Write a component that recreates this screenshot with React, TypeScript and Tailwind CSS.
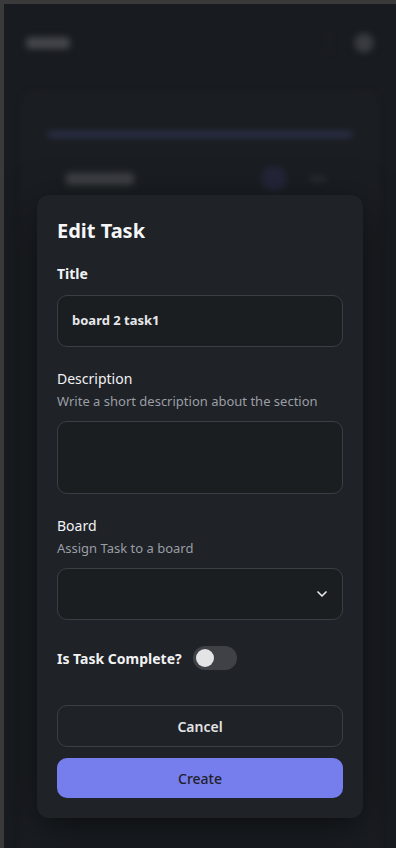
import { ChevronDown } from "lucide-react";

function Field({
  label,
  hint,
  children,
  bold,
}: {
  label: string;
  hint?: string;
  children: React.ReactNode;
  bold?: boolean;
}) {
  return (
    <div className="flex flex-col">
      <span
        className={`text-[14px] leading-5 text-[#f1f2f4] ${bold ? "font-bold" : "font-normal"}`}
      >
        {label}
      </span>
      {hint && (
        <span className="mt-[2px] text-[13px] leading-5 text-[#9a9ea6]">{hint}</span>
      )}
      <div className={hint ? "mt-[10px]" : "mt-[11px]"}>{children}</div>
    </div>
  );
}

export default function App() {
  return (
    <div
      className="h-[848px] w-full overflow-hidden bg-[#3a3a3b] pl-1 pt-1"
      style={{ fontFamily: "'Noto Sans', 'Open Sans', sans-serif" }}
    >
      <div className="relative h-full w-full overflow-hidden bg-[#1b1f23]">
        {/* blurred page behind the dialog */}
        <div className="flex h-full flex-col blur-[3px]">
          <div className="flex h-[78px] items-center justify-between px-[22px]">
            <div className="h-3 w-11 rounded bg-[#4a4d52]" />
            <div className="flex items-center gap-6">
              <div className="h-5 w-px bg-[#2a2d31]" />
              <div className="h-5 w-5 rounded-full bg-[#3f4247]" />
            </div>
          </div>
          <div className="mx-[18px] mt-[10px] flex-1 rounded-t-xl bg-[#1e2227] px-[26px] pt-[40px]">
            <div className="h-[5px] rounded-full bg-[#34385a]" />
            <div className="mt-[30px] flex items-center justify-between pl-[18px] pr-[26px]">
              <div className="h-3 w-[68px] rounded bg-[#44474c]" />
              <div className="flex items-center gap-6">
                <div className="h-6 w-6 rounded-full bg-[#282b40]" />
                <div className="h-1 w-4 rounded bg-[#35383d]" />
              </div>
            </div>
          </div>
        </div>

        {/* overlay */}
        <div className="absolute inset-0 bg-black/10" />

        {/* dialog */}
        <div className="absolute inset-x-0 top-[191px] flex justify-center">
          <div className="w-[326px] rounded-xl bg-[#1f2226] px-5 pb-5 pt-[22px] shadow-[0_10px_40px_rgba(0,0,0,0.55)]">
            <h2 className="text-[20px] font-bold leading-7 text-[#f5f6f7]">Edit Task</h2>

            <div className="mt-[19px] flex flex-col gap-[22px]">
              <Field label="Title" bold>
                <div className="flex h-[52px] items-center rounded-[10px] border border-[#3b3e43] bg-[#1b1e21] px-[14px] text-[13px] font-bold text-[#e6e7ea]">
                  board 2 task1
                </div>
              </Field>

              <Field label="Description" hint="Write a short description about the section">
                <div className="h-[73px] rounded-[10px] border border-[#3b3e43] bg-[#1b1e21]" />
              </Field>

              <Field label="Board" hint="Assign Task to a board">
                <div className="flex h-[52px] items-center justify-end rounded-[10px] border border-[#3b3e43] bg-[#1b1e21] pr-[12px]">
                  <ChevronDown size={16} strokeWidth={2.5} className="text-[#e6e7ea]" />
                </div>
              </Field>
            </div>

            <div className="mt-[26px] flex items-center gap-[11px]">
              <span className="text-[14px] font-bold text-[#f1f2f4]">Is Task Complete?</span>
              <div className="flex h-6 w-11 items-center rounded-full bg-[#3f4146] px-[3px]">
                <div className="h-[18px] w-[18px] rounded-full bg-[#e4e4e6]" />
              </div>
            </div>

            <div className="mt-[35px] flex flex-col gap-[11px]">
              <button className="h-[42px] rounded-[10px] border border-[#3b3e43] text-[14px] font-semibold text-[#e3e4e7]">
                Cancel
              </button>
              <button className="h-10 rounded-[10px] bg-[#767ded] text-[14px] font-medium text-[#1e2129]">
                Create
              </button>
            </div>
          </div>
        </div>
      </div>
    </div>
  );
}
